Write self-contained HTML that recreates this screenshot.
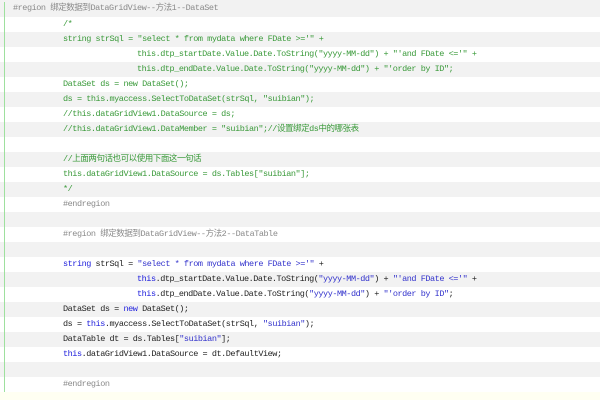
<!DOCTYPE html>
<html><head><meta charset="utf-8"><style>
html,body{margin:0;padding:0;width:600px;height:400px;overflow:hidden;background:#fffff2;}
#c{position:absolute;left:0;top:0;width:600px;height:392px;}
.r{position:absolute;left:0;width:600px;height:15px;line-height:15px;white-space:pre;font-family:"Liberation Mono","Noto Sans CJK SC",monospace;font-size:8.5px;letter-spacing:-0.45px;color:#222;}
.g{background:#f2f2f2;}
.w{background:#fff;}
.t{position:absolute;top:0;}
.cm{color:#3a9a3a;}
.gr{color:#8a8a8a;}
.k{color:#2222dd;}
.s{color:#3333cc;}
#bar{position:absolute;left:4px;top:2px;width:1px;height:390px;background:#9ee09e;}
</style></head><body>
<div id="c">
<div class="r g" style="top:0;height:17px;line-height:17px"><span class="t gr" style="left:13px">#region 绑定数据到DataGridView--方法1--DataSet</span></div>
<div class="r w" style="top:17px"><span class="t cm" style="left:63px">/*</span></div>
<div class="r g" style="top:32px"><span class="t cm" style="left:63px">string strSql = "select * from mydata where FDate >='" +</span></div>
<div class="r w" style="top:47px"><span class="t cm" style="left:137px">this.dtp_startDate.Value.Date.ToString("yyyy-MM-dd") + "'and FDate &lt;='" +</span></div>
<div class="r g" style="top:62px"><span class="t cm" style="left:137px">this.dtp_endDate.Value.Date.ToString("yyyy-MM-dd") + "'order by ID";</span></div>
<div class="r w" style="top:77px"><span class="t cm" style="left:63px">DataSet ds = new DataSet();</span></div>
<div class="r g" style="top:92px"><span class="t cm" style="left:63px">ds = this.myaccess.SelectToDataSet(strSql, "suibian");</span></div>
<div class="r w" style="top:107px"><span class="t cm" style="left:63px">//this.dataGridView1.DataSource = ds;</span></div>
<div class="r g" style="top:122px"><span class="t cm" style="left:63px">//this.dataGridView1.DataMember = "suibian";//设置绑定ds中的哪张表</span></div>
<div class="r w" style="top:137px"></div>
<div class="r g" style="top:152px"><span class="t cm" style="left:63px">//上面两句话也可以使用下面这一句话</span></div>
<div class="r w" style="top:167px"><span class="t cm" style="left:63px">this.dataGridView1.DataSource = ds.Tables["suibian"];</span></div>
<div class="r g" style="top:182px"><span class="t cm" style="left:63px">*/</span></div>
<div class="r w" style="top:197px"><span class="t gr" style="left:63px">#endregion</span></div>
<div class="r g" style="top:212px"></div>
<div class="r w" style="top:227px"><span class="t gr" style="left:63px">#region 绑定数据到DataGridView--方法2--DataTable</span></div>
<div class="r g" style="top:242px"></div>
<div class="r w" style="top:257px"><span class="t" style="left:63px"><span class="k">string</span> strSql = <span class="s">"select * from mydata where FDate &gt;='"</span> +</span></div>
<div class="r g" style="top:272px"><span class="t" style="left:137px"><span class="k">this</span>.dtp_startDate.Value.Date.ToString(<span class="s">"yyyy-MM-dd"</span>) + <span class="s">"'and FDate &lt;='"</span> +</span></div>
<div class="r w" style="top:287px"><span class="t" style="left:137px"><span class="k">this</span>.dtp_endDate.Value.Date.ToString(<span class="s">"yyyy-MM-dd"</span>) + <span class="s">"'order by ID"</span>;</span></div>
<div class="r g" style="top:302px"><span class="t" style="left:63px">DataSet ds = <span class="k">new</span> DataSet();</span></div>
<div class="r w" style="top:317px"><span class="t" style="left:63px">ds = <span class="k">this</span>.myaccess.SelectToDataSet(strSql, <span class="s">"suibian"</span>);</span></div>
<div class="r g" style="top:332px"><span class="t" style="left:63px">DataTable dt = ds.Tables[<span class="s">"suibian"</span>];</span></div>
<div class="r w" style="top:347px"><span class="t" style="left:63px"><span class="k">this</span>.dataGridView1.DataSource = dt.DefaultView;</span></div>
<div class="r g" style="top:362px"></div>
<div class="r w" style="top:377px"><span class="t gr" style="left:63px">#endregion</span></div>
</div>
<div id="bar"></div>
</body></html>
